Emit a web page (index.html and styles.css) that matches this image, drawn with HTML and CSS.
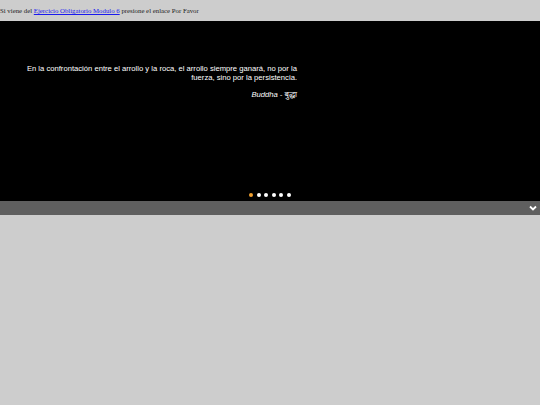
FILE: index.html
```html
<!DOCTYPE html>
<html>
<head>
<meta charset="utf-8">
<link rel="stylesheet" href="styles.css">
</head>
<body>
<div class="topbar">Si viene del <a href="#">Ejercicio Obligatorio Modulo 6</a> presione el enlace Por Favor</div>
<div class="slider">
  <div class="quote">
    <p class="text">En la confrontación entre el arrollo y la roca, el arrollo siempre ganará, no por la<br>fuerza, sino por la persistencia.</p>
    <p class="author">Buddha - बुद्धा</p>
  </div>
  <div class="dots">
    <span class="dot active"></span><span class="dot"></span><span class="dot"></span><span class="dot"></span><span class="dot"></span><span class="dot"></span>
  </div>
</div>
<div class="navbar">
  <svg class="chev" width="8" height="6" viewBox="0 0 8 6"><path d="M1 1.5 L4 4.5 L7 1.5" fill="none" stroke="#fff" stroke-width="1.8"/></svg>
</div>
</body>
</html>
```
FILE: styles.css
```css
html, body { margin: 0; padding: 0; }
body { background: #cdcdcd; }
.topbar {
  height: 21px;
  font-family: "Liberation Serif", serif;
  font-size: 6.8px;
  line-height: 21px;
  color: #222;
}
.topbar a { color: #1a1aee; }
.slider {
  height: 180px;
  background: #000;
  display: flex;
  flex-direction: column;
}
.quote {
  width: 285px;
  margin: 43px 0 0 12px;
  font-family: "Liberation Sans", "Noto Sans", sans-serif;
  font-size: 7.65px;
  color: #fff;
  text-align: right;
  flex: 1;
}
.quote p { margin: 0; white-space: nowrap; }
.text { line-height: 9px; }
.author { font-style: italic; margin-top: 7px !important; }
.dots {
  display: flex;
  justify-content: center;
  gap: 3.6px;
  padding-bottom: 4px;
}
.dot { width: 4px; height: 4px; border-radius: 50%; background: #fff; }
.dot.active { background: #f0a030; }
.navbar {
  height: 14px;
  background: #5f5f5f;
  display: flex;
  justify-content: flex-end;
  align-items: center;
  padding-right: 3px;
}
```
